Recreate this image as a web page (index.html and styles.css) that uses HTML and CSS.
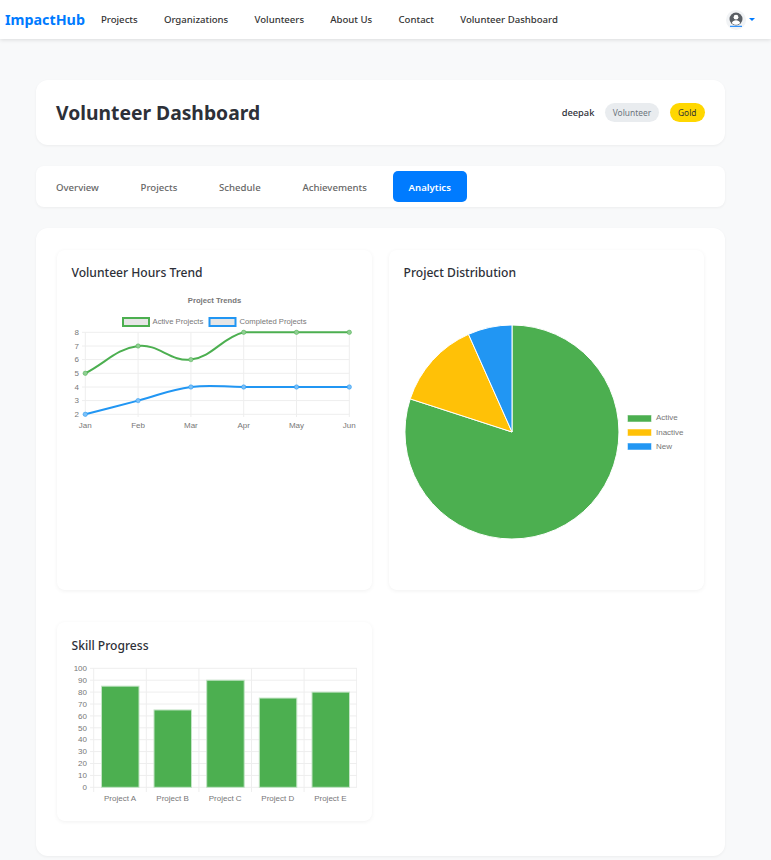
FILE: index.html
```html
<!DOCTYPE html>
<html lang="en">
<head>
    <meta charset="UTF-8">
    <meta name="viewport" content="width=device-width, initial-scale=1.0">
    <title>Volunteer Dashboard</title>
    <link rel="stylesheet" href="styles.css">
</head>
<body>
    <nav class="navbar">
        <a class="brand" href="#">ImpactHub</a>
        <ul class="nav-links">
            <li><a href="#">Projects</a></li>
            <li><a href="#">Organizations</a></li>
            <li><a href="#">Volunteers</a></li>
            <li><a href="#">About Us</a></li>
            <li><a href="#">Contact</a></li>
            <li><a href="#">Volunteer Dashboard</a></li>
        </ul>
        <a class="user-menu" href="#">
            <span class="avatar">
                <svg width="14" height="15" viewBox="0 0 14 15">
                    <circle cx="7" cy="7" r="6.500" fill="#5a5f65"/>
                    <circle cx="7" cy="5.200" r="2.400" fill="#fff"/>
                    <path d="M2.800 11c.7-1.800 2.200-2.700 4.200-2.700s3.500.9 4.200 2.700c-1 1.100-2.500 1.800-4.200 1.800s-3.200-.7-4.200-1.800z" fill="#fff"/>
                    <path d="M1 14.300h12" stroke="#007bff" stroke-width="1"/>
                </svg>
            </span>
            <span class="caret"></span>
        </a>
    </nav>

    <main class="page">
        <header class="card page-header">
            <h1>Volunteer Dashboard</h1>
            <div class="user-info">
                <span class="user-name">deepak</span>
                <span class="badge badge-role">Volunteer</span>
                <span class="badge badge-tier">Gold</span>
            </div>
        </header>

        <div class="card tabs">
            <button type="button" class="tab">Overview</button>
            <button type="button" class="tab">Projects</button>
            <button type="button" class="tab">Schedule</button>
            <button type="button" class="tab">Achievements</button>
            <button type="button" class="tab active">Analytics</button>
        </div>

        <section class="card analytics">
            <div class="chart-card">
                <h3>Volunteer Hours Trend</h3>
                <svg class="chart" width="285" height="142" viewBox="0 0 285 142">
                    <text class="chart-title" x="142.500" y="13">Project Trends</text>
                    <rect class="legend-box" x="51" y="28" width="26" height="8" stroke="#4caf50"/>
                    <text class="legend-label" x="80.500" y="34">Active Projects</text>
                    <rect class="legend-box" x="137.500" y="28" width="26" height="8" stroke="#2196f3"/>
                    <text class="legend-label" x="167.500" y="34">Completed Projects</text>
                    <path class="grid" d="M13.300 42.300V127M66.100 42.300V127M118.900 42.300V127M171.700 42.300V127M224.500 42.300V127M277.300 42.300V127"/>
                    <path class="grid" d="M10 42.300H277.300M10 56H277.300M10 69.600H277.300M10 83.300H277.300M10 97H277.300M10 110.600H277.300M10 124.300H277.300"/>
                    <g class="tick tick-y">
                        <text x="7" y="45">8</text>
                        <text x="7" y="58.700">7</text>
                        <text x="7" y="72.300">6</text>
                        <text x="7" y="86">5</text>
                        <text x="7" y="99.700">4</text>
                        <text x="7" y="113.300">3</text>
                        <text x="7" y="127">2</text>
                    </g>
                    <g class="tick tick-x">
                        <text x="13.300" y="138">Jan</text>
                        <text x="66.100" y="138">Feb</text>
                        <text x="118.900" y="138">Mar</text>
                        <text x="171.700" y="138">Apr</text>
                        <text x="224.500" y="138">May</text>
                        <text x="277.300" y="138">Jun</text>
                    </g>
                    <path class="line" stroke="#4caf50" d="M13.300 83.300C34.400 72.400 44.100 58.900 66.100 56C86.300 53.400 98.700 72.200 118.900 69.600C140.900 66.700 149.300 48.100 171.700 42.300H277.300"/>
                    <path class="line" stroke="#2196f3" d="M13.300 124.300C34.400 118.800 45 116.100 66.100 110.600C87.200 105.100 97.400 99.800 118.900 97C139.700 94.300 150.600 97 171.700 97H277.300"/>
                    <g class="dots" fill="#8fcf92" stroke="#4caf50">
                        <circle cx="13.300" cy="83.300" r="2.200"/>
                        <circle cx="66.100" cy="56" r="2.200"/>
                        <circle cx="118.900" cy="69.600" r="2.200"/>
                        <circle cx="171.700" cy="42.300" r="2.200"/>
                        <circle cx="224.500" cy="42.300" r="2.200"/>
                        <circle cx="277.300" cy="42.300" r="2.200"/>
                    </g>
                    <g class="dots" fill="#7cc0f7" stroke="#2196f3">
                        <circle cx="13.300" cy="124.300" r="2.200"/>
                        <circle cx="66.100" cy="110.600" r="2.200"/>
                        <circle cx="118.900" cy="97" r="2.200"/>
                        <circle cx="171.700" cy="97" r="2.200"/>
                        <circle cx="224.500" cy="97" r="2.200"/>
                        <circle cx="277.300" cy="97" r="2.200"/>
                    </g>
                </svg>
            </div>

            <div class="chart-card">
                <h3>Project Distribution</h3>
                <svg class="chart" width="285" height="285" viewBox="0 0 285 285">
                    <g class="slices">
                        <path fill="#4caf50" d="M108 142V35A107 107 0 1 1 6.200 108.900Z"/>
                        <path fill="#ffc107" d="M108 142L6.200 108.900A107 107 0 0 1 64.500 44.300Z"/>
                        <path fill="#2196f3" d="M108 142L64.500 44.300A107 107 0 0 1 108 35Z"/>
                    </g>
                    <rect class="swatch" x="223.500" y="125" width="24" height="7" fill="#4caf50"/>
                    <rect class="swatch" x="223.500" y="139" width="24" height="7" fill="#ffc107"/>
                    <rect class="swatch" x="223.500" y="153" width="24" height="7" fill="#2196f3"/>
                    <text class="tick" x="252" y="130">Active</text>
                    <text class="tick" x="252" y="144.500">Inactive</text>
                    <text class="tick" x="252" y="158.500">New</text>
                </svg>
            </div>

            <div class="chart-card">
                <h3>Skill Progress</h3>
                <svg class="chart" width="285" height="144" viewBox="0 0 285 144">
                    <path class="grid" d="M21.700 6.300V130M74.300 6.300V130M126.900 6.300V130M179.500 6.300V130M232.100 6.300V130M284.700 6.300V125"/>
                    <path class="grid" d="M18 6.300H285M18 18.200H285M18 30.100H285M18 42H285M18 53.900H285M18 65.800H285M18 77.700H285M18 89.600H285M18 101.500H285M18 113.400H285M18 125.300H285"/>
                    <g class="tick tick-y">
                        <text x="15" y="9">100</text>
                        <text x="15" y="20.900">90</text>
                        <text x="15" y="32.800">80</text>
                        <text x="15" y="44.700">70</text>
                        <text x="15" y="56.600">60</text>
                        <text x="15" y="68.500">50</text>
                        <text x="15" y="80.400">40</text>
                        <text x="15" y="92.300">30</text>
                        <text x="15" y="104.200">20</text>
                        <text x="15" y="116.100">10</text>
                        <text x="15" y="128">0</text>
                    </g>
                    <g class="bars">
                        <rect x="29.500" y="24.150" width="37.500" height="101.150"/>
                        <rect x="82" y="47.950" width="37.500" height="77.350"/>
                        <rect x="134.700" y="18.200" width="37.500" height="107.100"/>
                        <rect x="187.300" y="36.050" width="37.500" height="89.250"/>
                        <rect x="240" y="30.100" width="37.500" height="95.200"/>
                    </g>
                    <g class="tick tick-x">
                        <text x="48" y="139">Project A</text>
                        <text x="100.600" y="139">Project B</text>
                        <text x="153.200" y="139">Project C</text>
                        <text x="205.800" y="139">Project D</text>
                        <text x="258.400" y="139">Project E</text>
                    </g>
                </svg>
            </div>
        </section>
    </main>
</body>
</html>
```

FILE: styles.css
```css
* {
    box-sizing: border-box;
}
body {
    font-family: "Noto Sans", Arial, sans-serif;
    margin: 0;
    background-color: #f8f9fa;
    color: #2d3038;
}
a {
    color: inherit;
    text-decoration: none;
}

.navbar {
    display: flex;
    align-items: center;
    height: 39px;
    padding: 0 16px 0 5px;
    background-color: white;
    box-shadow: 0 1px 4px rgba(0, 0, 0, 0.12);
}
.brand {
    font-size: 14.300px;
    font-weight: 700;
    color: #007bff;
}
.nav-links {
    display: flex;
    gap: 26.200px;
    margin: 0 0 0 16px;
    padding: 0;
    list-style: none;
    font-size: 9.600px;
    font-weight: 500;
    color: #333;
}
.user-menu {
    display: flex;
    align-items: center;
    gap: 3px;
    margin-left: auto;
}
.avatar {
    display: flex;
    align-items: center;
    justify-content: center;
    width: 20px;
    height: 20px;
    border-radius: 50%;
    background-color: #f1f3f5;
}
.caret {
    width: 0;
    height: 0;
    border-left: 3px solid transparent;
    border-right: 3px solid transparent;
    border-top: 3px solid #007bff;
}

.page {
    display: flex;
    flex-direction: column;
    gap: 21px;
    padding: 41px 46px 4px 36px;
}
.card {
    background-color: white;
    border-radius: 12px;
    box-shadow: 0 1px 3px rgba(0, 0, 0, 0.05);
}

.page-header {
    display: flex;
    align-items: center;
    justify-content: space-between;
    height: 65px;
    padding: 0 20px;
}
h1 {
    margin: 0;
    font-size: 19.300px;
    font-weight: 700;
    color: #2d3038;
}
.user-info {
    display: flex;
    align-items: center;
    gap: 11px;
}
.user-name {
    font-size: 9.300px;
    font-weight: 500;
}
.badge {
    padding: 3px 7.400px;
    border-radius: 10px;
    font-size: 8.400px;
    line-height: 13px;
}
.badge-role {
    background-color: #e9ecef;
    color: #6c757d;
}
.badge-tier {
    padding: 3px 8.500px;
    background-color: #ffd700;
    color: #333;
}

.tabs {
    display: flex;
    gap: 9.750px;
    height: 41px;
    padding: 5px 4px;
    border-radius: 8px;
}
.tab {
    padding: 1px 16px 0;
    border: 0;
    border-radius: 5px;
    background: none;
    font-family: inherit;
    font-size: 9.600px;
    font-weight: 500;
    color: #666;
}
.tab.active {
    background-color: #007bff;
    color: white;
    font-weight: 600;
}

.analytics {
    display: grid;
    grid-template-columns: 315px 315px;
    column-gap: 17px;
    row-gap: 32px;
    padding: 22px 21px 35px;
}
.chart-card {
    padding: 15px 15px 15px 14.500px;
    background-color: white;
    border-radius: 8px;
    box-shadow: 0 1px 4px rgba(0, 0, 0, 0.06);
}
h3 {
    margin: 0 0 10px;
    font-size: 12.100px;
    line-height: 15px;
    font-weight: 500;
    color: #2d3038;
}
.chart-card:last-child h3 {
    margin: 1px 0 9px;
}
.chart {
    display: block;
    margin-left: 0.500px;
}
.chart-title {
    font: bold 7.700px "Liberation Sans", Arial, sans-serif;
    fill: #777;
    text-anchor: middle;
}
.legend-label {
    font: 7.700px "Liberation Sans", Arial, sans-serif;
    fill: #777;
}
.tick {
    font: 8px "Liberation Sans", Arial, sans-serif;
    fill: #777;
}
.tick-y {
    text-anchor: end;
}
.tick-x {
    text-anchor: middle;
}
.grid {
    fill: none;
    stroke: #eee;
    stroke-width: 1;
}
.line {
    fill: none;
    stroke-width: 2;
}
.dots {
    stroke-width: 0.500;
}
.legend-box {
    fill: #e6e6e6;
    stroke-width: 2;
}
.slices path {
    stroke: white;
    stroke-width: 1;
}
.swatch {
    stroke: rgba(255, 255, 255, 0.5);
    stroke-width: 1;
}
.bars rect {
    fill: #4caf50;
    stroke: #c4e4c6;
    stroke-width: 1;
}
```
